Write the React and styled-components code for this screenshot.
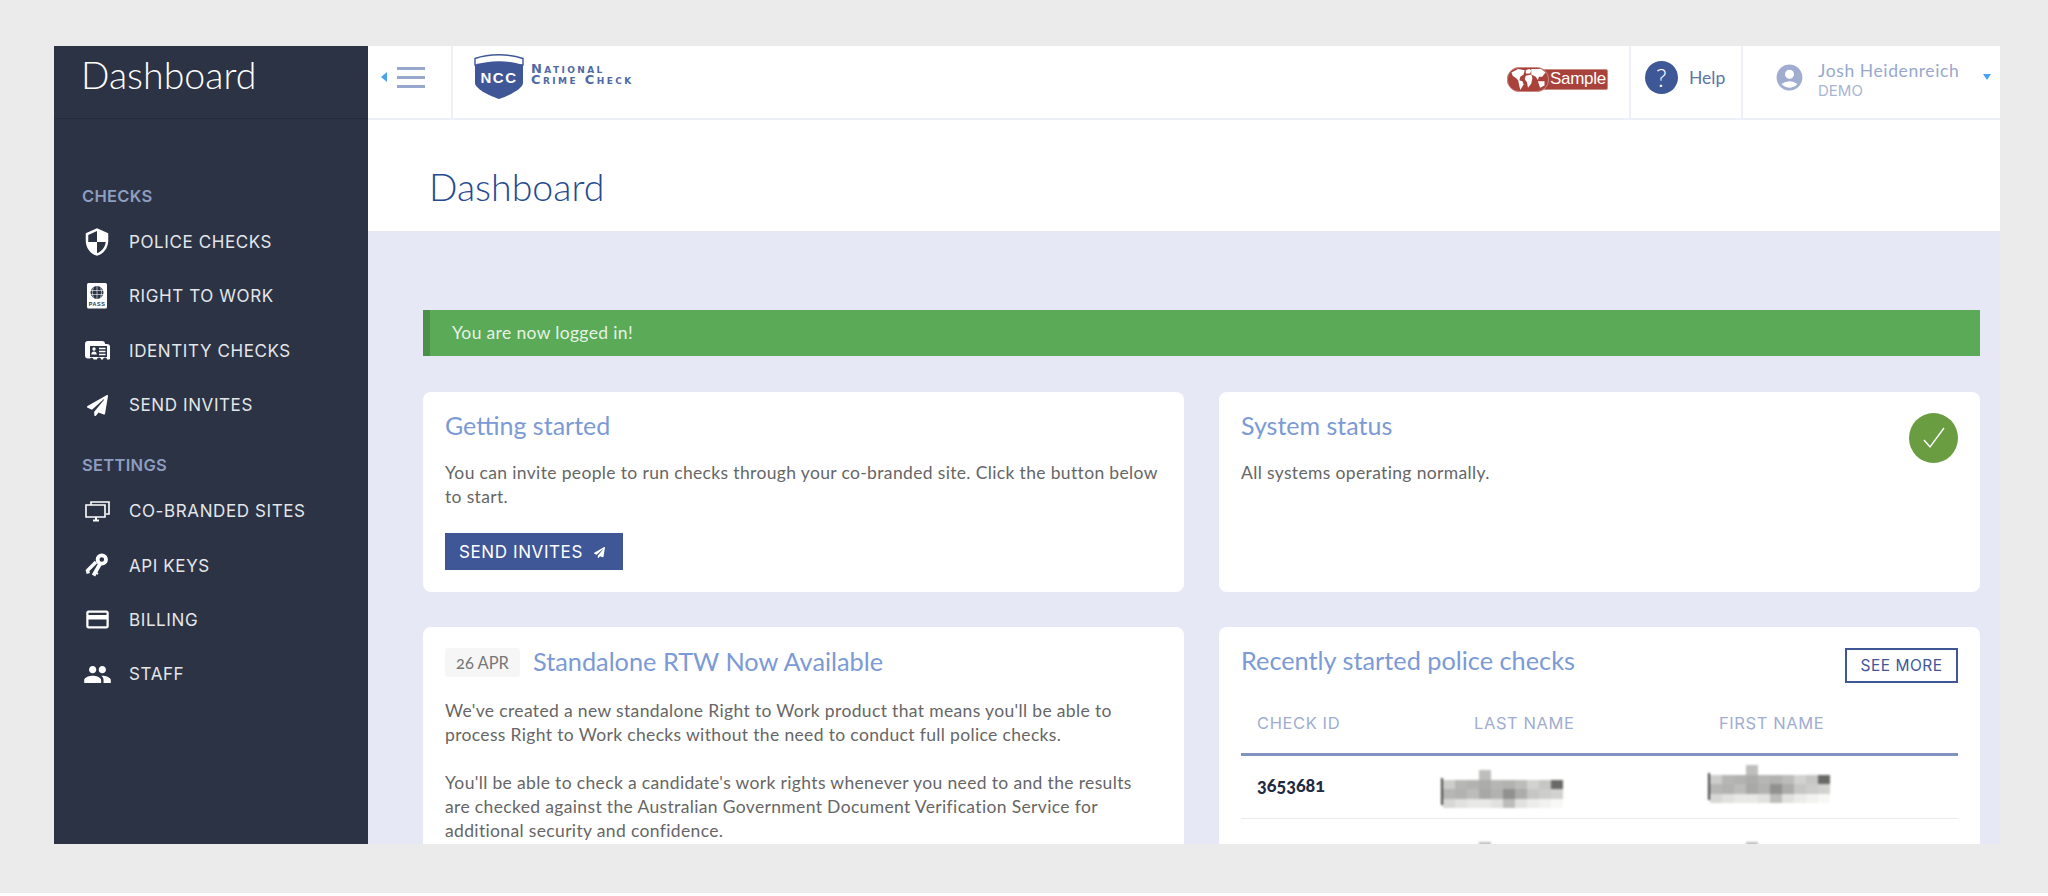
import React from 'react';
import styled, { createGlobalStyle } from 'styled-components';
import { FaPaperPlane } from 'react-icons/fa';
import { MdSecurity, MdCreditCard, MdPeople, MdAccountCircle } from 'react-icons/md';

const GlobalStyle = createGlobalStyle`
  html, body {
    margin: 0;
    padding: 0;
    background: #fff;
  }
  * {
    box-sizing: border-box;
  }
`;

const heading = `'Lato', 'Liberation Sans', sans-serif`;
const label = `'Inter', 'Liberation Sans', sans-serif`;

const PassportIcon = () => (
  <svg width="21" height="26" viewBox="0 0 21 26">
    <rect width="20" height="25.5" rx="1.5" fill="#fff" />
    <circle cx="10" cy="9.5" r="6.5" fill="#2b3345" />
    <path d="M3.6 7.5h12.8M3.6 11.5h12.8M10 3v13M6.5 4.5c-1.5 3-1.5 7 0 10M13.5 4.5c1.5 3 1.5 7 0 10" stroke="#fff" strokeWidth=".6" fill="none" />
    <text x="10" y="23" fontSize="5.4" fontWeight="700" textAnchor="middle" fill="#2b3345" fontFamily="Liberation Sans">PASS</text>
  </svg>
);

const IdentityIcon = () => (
  <svg width="25" height="20" viewBox="0 0 25 20">
    <path d="M3 0h14a3 3 0 0 1 3 3h2a3 3 0 0 1 3 3v11.5a1 1 0 0 1-1 1h-2a2 2 0 0 0-4 0h-2a2 2 0 0 0-4 0H8.500a2 2 0 0 0-3.500-1H3a3 3 0 0 1-3-3V3a3 3 0 0 1 3-3z" fill="#fff" />
    <rect x="5" y="5" width="17" height="11" fill="#2b3345" />
    <circle cx="9" cy="8" r="1.700" fill="#fff" />
    <path d="M6.200 13.500c0-4 5.600-4 5.600 0z" fill="#fff" />
    <path d="M14 7.500h6.500M14 10.500h6.500M14 13.500h6.500" stroke="#fff" strokeWidth="1.500" />
  </svg>
);

const SitesIcon = () => (
  <svg width="25" height="21" viewBox="0 0 25 21" fill="none" stroke="#fff" strokeWidth="1.600">
    <path d="M6 4V1h18v12h-3" />
    <path d="M3 4h17v12H1V4z" />
    <path d="M8 19.500h6M11 16v3" strokeWidth="2" />
  </svg>
);

const KeysIcon = () => (
  <svg width="24" height="25" viewBox="0 0 24 25" fill="none" stroke="#fff">
    <path d="M11 9 2.500 17.500l.8 3" strokeWidth="3.400" />
    <path d="M15 11 8.500 22.500" strokeWidth="3.800" />
    <path d="M10.500 19.500l2.500 1.500" strokeWidth="2" />
    <circle cx="16.800" cy="6.500" r="4.200" strokeWidth="3.800" />
  </svg>
);

const LogoShield = () => (
  <svg width="50" height="46" viewBox="0 0 50 46">
    <path d="M1 5.500C15 .5 35 .5 49 5.500V12H1z" fill="#fff" stroke="#3f5797" strokeWidth="1.400" />
    <path d="M1 12C15 7 35 7 49 12v18c0 5-12 12-24 16C13 42 1 35 1 30z" fill="#3f5797" />
    <text x="25" y="30" fontSize="15" fontWeight="700" letterSpacing="1.500" textAnchor="middle" fill="#fff" fontFamily="Liberation Sans">NCC</text>
  </svg>
);

const GlobeBlobs = () => (
  <svg width="36" height="22" viewBox="0 0 32 20" fill="#fff">
    <path d="M1 4l6-3 6 1-1 4-3 2-1 4-3-3-3-2z" />
    <path d="M7 11l4 1 1 3-3 5-1-4z" />
    <path d="M14 2l3-1 2 1-1 3-4 0z" />
    <path d="M14 7l5-1 1 3-1 5-3 4-1-5-2-3z" />
    <path d="M19 1l9 0 4 3-3 4-3 0-1 3-2-3-4-2z" />
    <path d="M25 12l6 0 0 4-4 2z" />
  </svg>
);

const redactedTop = [
  [0, 0, 0, 190, 0, 0, 0, 0, 0, 0],
  [205, 182, 178, 172, 182, 178, 188, 210, 198, 105],
  [182, 178, 188, 168, 178, 145, 172, 198, 205, 210],
  [215, 225, 232, 232, 225, 188, 225, 236, 242, 248],
];

const checksSection = [
  { text: 'POLICE CHECKS', icon: <MdSecurity size={30} color="#fff" /> },
  { text: 'RIGHT TO WORK', icon: <PassportIcon /> },
  { text: 'IDENTITY CHECKS', icon: <IdentityIcon /> },
  { text: 'SEND INVITES', icon: <FaPaperPlane size={21} color="#fff" /> },
];

const settingsSection = [
  { text: 'CO-BRANDED SITES', icon: <SitesIcon /> },
  { text: 'API KEYS', icon: <KeysIcon /> },
  { text: 'BILLING', icon: <MdCreditCard size={27} color="#fff" /> },
  { text: 'STAFF', icon: <MdPeople size={29} color="#fff" /> },
];

const Redacted = ({ shift, top }) => (
  <RedactedWrap $shift={shift} $top={top}>
    <RedactedBar />
    <Mosaic>
      {redactedTop.flat().map((grey, i) => (
        <MosaicCell key={i} $grey={grey} />
      ))}
    </Mosaic>
  </RedactedWrap>
);

export default function App() {
  return (
    <Page>
      <GlobalStyle />
      <Frame>
        <Sidebar>
          <SidebarHeader>Dashboard</SidebarHeader>
          <SidebarNav>
            <SectionLabel>CHECKS</SectionLabel>
            {checksSection.map((item) => (
              <NavItem key={item.text}>
                <NavIcon>{item.icon}</NavIcon>
                {item.text}
              </NavItem>
            ))}
            <SectionLabel>SETTINGS</SectionLabel>
            {settingsSection.map((item) => (
              <NavItem key={item.text}>
                <NavIcon>{item.icon}</NavIcon>
                {item.text}
              </NavItem>
            ))}
          </SidebarNav>
        </Sidebar>

        <Main>
          <TopBar>
            <ToggleCell>
              <ToggleArrow />
              <Burger>
                <span />
                <span />
                <span />
              </Burger>
            </ToggleCell>
            <LogoCell>
              <LogoShield />
              <LogoText>
                <div>National</div>
                <div>Crime Check</div>
              </LogoText>
            </LogoCell>
            <SampleBadge>
              <SampleGlobe>
                <GlobeBlobs />
              </SampleGlobe>
              <SampleText>Sample</SampleText>
            </SampleBadge>
            <HelpCell>
              <HelpCircle>?</HelpCircle>
              <HelpLabel>Help</HelpLabel>
            </HelpCell>
            <UserCell>
              <MdAccountCircle size={31} color="#a0add0" />
              <UserInfo>
                <UserName>Josh Heidenreich</UserName>
                <UserRole>DEMO</UserRole>
              </UserInfo>
              <UserCaret />
            </UserCell>
          </TopBar>

          <PageHeader>
            <PageTitle>Dashboard</PageTitle>
          </PageHeader>

          <Content>
            <Alert>You are now logged in!</Alert>
            <CardGrid>
              <Card $height={200}>
                <CardTitle>Getting started</CardTitle>
                <CardText>
                  You can invite people to run checks through your co-branded site. Click the button below to start.
                </CardText>
                <PrimaryButton>
                  SEND INVITES
                  <FaPaperPlane size={11} color="#fff" />
                </PrimaryButton>
              </Card>

              <Card $height={200}>
                <CardTitle>System status</CardTitle>
                <CardText>All systems operating normally.</CardText>
                <StatusBadge>
                  <svg width="26" height="26" viewBox="0 0 26 26" fill="none" stroke="#fff" strokeWidth="1.400">
                    <path d="M3 15l6 7L23 3" />
                  </svg>
                </StatusBadge>
              </Card>

              <Card $height={260}>
                <NewsHeader>
                  <DateChip>26 APR</DateChip>
                  <NewsTitle>Standalone RTW Now Available</NewsTitle>
                </NewsHeader>
                <NewsText>
                  We've created a new standalone Right to Work product that means you'll be able to process Right to Work checks without the need to conduct full police checks.
                </NewsText>
                <NewsText>
                  You'll be able to check a candidate's work rights whenever you need to and the results are checked against the Australian Government Document Verification Service for additional security and confidence.
                </NewsText>
              </Card>

              <Card $height={260}>
                <RecentHeader>
                  <NewsTitle>Recently started police checks</NewsTitle>
                  <OutlineButton>SEE MORE</OutlineButton>
                </RecentHeader>
                <TableHead>
                  <HeadCell>CHECK ID</HeadCell>
                  <HeadCell>LAST NAME</HeadCell>
                  <HeadCell>FIRST NAME</HeadCell>
                </TableHead>
                <TableRow>
                  <IdCell>3653681</IdCell>
                  <Redacted shift={-33} top={0} />
                  <Redacted shift={-11} top={-5} />
                </TableRow>
                <TableRow>
                  <IdCell />
                  <Redacted shift={-33} top={9} />
                  <Redacted shift={-11} top={9} />
                </TableRow>
              </Card>
            </CardGrid>
          </Content>
        </Main>
      </Frame>
    </Page>
  );
}

const Page = styled.div`
  height: 893px;
  padding: 46px 48px 0 54px;
  background: #ebebeb;
`;

const Frame = styled.div`
  display: flex;
  height: 798px;
  overflow: hidden;
`;

const Sidebar = styled.aside`
  width: 314px;
  flex-shrink: 0;
  background: #2b3345;
`;

const SidebarHeader = styled.div`
  height: 73px;
  padding: 1px 0 0 27px;
  border-bottom: 1px solid #252c3c;
  font-family: ${heading};
  font-weight: 300;
  font-size: 37.5px;
  line-height: 56px;
  color: #fff;
`;

const SidebarNav = styled.nav`
  padding-top: 44px;
`;

const SectionLabel = styled.div`
  margin: 20px 0 6px 28px;
  font-family: ${label};
  font-weight: 600;
  font-size: 16.5px;
  line-height: 26px;
  letter-spacing: 0.3px;
  color: #8e9dc0;
`;

const NavItem = styled.div`
  display: flex;
  align-items: center;
  height: 54.3px;
  font-family: ${label};
  font-weight: 400;
  font-size: 17px;
  letter-spacing: 0.6px;
  color: #e4e6ea;
`;

const NavIcon = styled.span`
  display: flex;
  align-items: center;
  justify-content: center;
  width: 32px;
  margin: 0 16px 0 27px;
`;

const Main = styled.main`
  flex: 1;
  min-width: 0;
  background: #e6e9f5;
`;

const TopBar = styled.header`
  display: flex;
  align-items: stretch;
  height: 74px;
  background: #fff;
  border-bottom: 2px solid #eef0f8;
`;

const ToggleCell = styled.div`
  display: flex;
  align-items: center;
  width: 85px;
  padding: 0 0 10px 13px;
  border-right: 2px solid #eef0f8;
`;

const ToggleArrow = styled.span`
  width: 0;
  height: 0;
  margin-right: 10px;
  border-top: 5px solid transparent;
  border-bottom: 5px solid transparent;
  border-right: 6px solid #4aa3f0;
`;

const Burger = styled.div`
  display: flex;
  flex-direction: column;
  gap: 6px;
  width: 28px;

  span {
    height: 3px;
    background: #98a8cc;
  }
`;

const LogoCell = styled.div`
  display: flex;
  align-items: center;
  flex: 1;
  gap: 7px;
  padding: 0 0 12px 21px;
`;

const LogoText = styled.div`
  margin-bottom: 3px;
  font-family: 'DejaVu Sans', sans-serif;
  font-variant: small-caps;
  font-size: 13px;
  line-height: 10.5px;
  letter-spacing: 2.4px;
  color: #4f6aa5;
  font-weight: 700;
`;

const SampleBadge = styled.div`
  display: flex;
  align-items: center;
  align-self: center;
  height: 21px;
  width: 101px;
  margin: 0 21px 6px 0;
  background: #a9423a;
  border: 1px solid #c98a84;
  border-radius: 10px 2px 2px 10px;
`;

const SampleGlobe = styled.span`
  display: flex;
  align-items: center;
  justify-content: center;
  width: 42px;
  height: 25px;
  flex-shrink: 0;
  margin-left: -1px;
  background: #a9423a;
  border: 1px solid #c98a84;
  border-radius: 12px;
`;

const SampleText = styled.span`
  margin-left: 1px;
  font-family: 'Liberation Sans', sans-serif;
  font-size: 17px;
  letter-spacing: -0.3px;
  color: #fff;
`;

const HelpCell = styled.div`
  display: flex;
  align-items: center;
  gap: 11px;
  width: 112px;
  padding: 0 0 10px 14px;
  border-left: 2px solid #eef0f8;
`;

const HelpCircle = styled.span`
  display: flex;
  align-items: center;
  justify-content: center;
  width: 33px;
  height: 33px;
  border-radius: 50%;
  background: #3d5797;
  font-family: ${heading};
  font-weight: 300;
  font-size: 25px;
  color: #fff;
`;

const HelpLabel = styled.span`
  font-family: ${heading};
  font-size: 17.5px;
  color: #5b75ad;
`;

const UserCell = styled.div`
  display: flex;
  align-items: center;
  width: 259px;
  padding: 0 0 10px 31px;
  border-left: 2px solid #eef0f8;
`;

const UserInfo = styled.div`
  margin: 5px 0 0 13px;
  width: 165px;
`;

const UserName = styled.div`
  font-family: ${heading};
  font-size: 17.5px;
  line-height: 22px;
  letter-spacing: 0.6px;
  color: #98a8cc;
`;

const UserRole = styled.div`
  font-family: ${label};
  font-size: 15px;
  line-height: 18px;
  color: #a9b5d3;
`;

const UserCaret = styled.span`
  width: 0;
  height: 0;
  border-left: 4px solid transparent;
  border-right: 4px solid transparent;
  border-top: 6px solid #4aa3f0;
`;

const PageHeader = styled.div`
  height: 111px;
  padding-left: 61px;
  background: #fff;
`;

const PageTitle = styled.h1`
  margin: 0;
  padding-top: 41px;
  font-family: ${heading};
  font-weight: 300;
  font-size: 37.5px;
  line-height: 52px;
  color: #264a90;
`;

const Content = styled.div`
  padding: 79px 20px 0 55px;
`;

const Alert = styled.div`
  height: 46px;
  margin-bottom: 36px;
  padding-left: 22px;
  background: #5aaa58;
  border-left: 7px solid #4a8f4a;
  font-family: ${heading};
  font-size: 17.5px;
  letter-spacing: 0.35px;
  line-height: 46px;
  color: #e5f2e4;
`;

const CardGrid = styled.div`
  display: grid;
  grid-template-columns: 761px 761px;
  gap: 35px;
`;

const Card = styled.section`
  position: relative;
  height: ${(p) => p.$height}px;
  padding: 18px 22px 0;
  background: #fff;
  border-radius: 8px;
`;

const CardTitle = styled.h2`
  margin: 0;
  font-family: ${heading};
  font-weight: 400;
  font-size: 25px;
  line-height: 30px;
  color: #7b9ad6;
`;

const CardText = styled.p`
  margin: 21px 0 24px;
  font-family: ${heading};
  font-size: 17.5px;
  letter-spacing: 0.35px;
  line-height: 24px;
  color: #666;
`;

const PrimaryButton = styled.button`
  display: flex;
  align-items: center;
  gap: 11px;
  height: 37px;
  width: 178px;
  padding: 1px 0 0 14px;
  border: 0;
  background: #3f5797;
  font-family: ${label};
  font-size: 17px;
  letter-spacing: 0.6px;
  white-space: nowrap;
  color: #fff;
`;

const StatusBadge = styled.span`
  position: absolute;
  top: 21px;
  right: 22px;
  display: flex;
  align-items: center;
  justify-content: center;
  width: 49px;
  height: 50px;
  border-radius: 50%;
  background: #6a9c42;
`;

const NewsHeader = styled.div`
  display: flex;
  align-items: center;
  gap: 13px;
  height: 29px;
  margin-top: 3px;
`;

const DateChip = styled.span`
  width: 75px;
  height: 29px;
  background: #f6f6f6;
  border-radius: 3px;
  text-align: center;
  font-family: ${heading};
  font-size: 16.5px;
  font-variant-numeric: oldstyle-nums;
  line-height: 30px;
  color: #777;
`;

const NewsTitle = styled.h2`
  margin: 0;
  padding-bottom: 2px;
  font-family: ${heading};
  font-weight: 400;
  font-size: 25.3px;
  line-height: 25px;
  color: #7b9ad6;
`;

const NewsText = styled.p`
  margin: 22px 0 24px;
  padding-right: 15px;
  font-family: ${heading};
  font-size: 17.5px;
  letter-spacing: 0.35px;
  line-height: 24px;
  color: #666;

  & + & {
    margin-top: 24px;
  }
`;

const RecentHeader = styled.div`
  display: flex;
  justify-content: space-between;
  align-items: flex-start;
  height: 35px;
  margin-top: 3px;
`;

const OutlineButton = styled.button`
  width: 113px;
  height: 35px;
  padding: 0;
  border: 2px solid #3f5797;
  background: #fff;
  font-family: ${label};
  font-size: 15.5px;
  letter-spacing: 0.5px;
  color: #3f5797;
`;

const TableHead = styled.div`
  display: grid;
  grid-template-columns: 217px 245px 1fr;
  height: 73px;
  padding: 20px 0 0 16px;
  border-bottom: 3px solid #8292c0;
`;

const HeadCell = styled.div`
  font-family: ${label};
  font-size: 16.5px;
  letter-spacing: 0.6px;
  line-height: 40px;
  color: #a0add0;
`;

const TableRow = styled.div`
  display: grid;
  grid-template-columns: 217px 245px 1fr;
  height: 63px;
  padding-left: 16px;
  border-bottom: 1px solid #e8ebf5;
`;

const IdCell = styled.div`
  font-family: ${heading};
  font-weight: 900;
  font-size: 18px;
  font-variant-numeric: oldstyle-nums;
  line-height: 58px;
  color: #1f2a44;
`;

const RedactedWrap = styled.div`
  display: flex;
  align-items: stretch;
  width: 122px;
  height: 38px;
  margin-top: ${(p) => 14 + p.$top}px;
  margin-left: ${(p) => p.$shift}px;
  filter: blur(0.8px);
`;

const RedactedBar = styled.span`
  width: 3px;
  margin: 8px 0 3px;
  background: #444;
`;

const Mosaic = styled.div`
  display: grid;
  grid-template-columns: repeat(10, 12px);
  grid-auto-rows: 9.5px;
`;

const MosaicCell = styled.span`
  background: ${(p) => (p.$grey ? `rgb(${p.$grey},${p.$grey},${p.$grey - 2})` : 'transparent')};
`;
